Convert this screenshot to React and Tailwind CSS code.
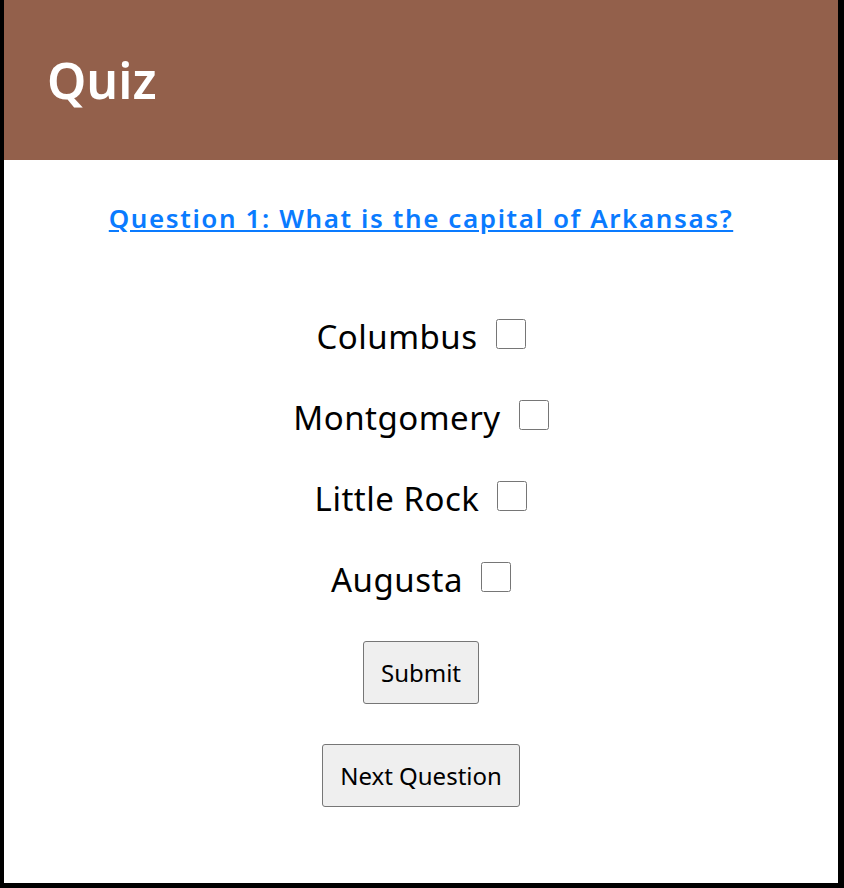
import { useState } from "react";

const options = ["Columbus", "Montgomery", "Little Rock", "Augusta"];

const App = () => {

  const [checked, setChecked] = useState({});

  const toggle = (name) => {
    setChecked({
      ...checked,
      [name]: !checked[name],
    });
  };

  return (
    <div className="min-h-[888px] bg-black pl-[4px] pr-[6px] pb-[5px] font-['Noto_Sans',sans-serif]">

      <div className="bg-white h-[883px]">

        <header className="bg-[#93604b] h-[160px] flex items-center pl-[43px]">
          <h1 className="text-white text-[50px] font-semibold leading-none">
            Quiz
          </h1>
        </header>

        <div className="flex flex-col items-center">

          <a
            href="#"
            className="mt-[38px] text-[#0a7bff] underline text-[26px] font-semibold tracking-[1.6px] leading-[40px]"
          >
            Question 1: What is the capital of Arkansas?
          </a>

          <div className="mt-[76px] flex flex-col items-center gap-[35px]">
            {options.map((opt) => (
              <label
                key={opt}
                className="flex items-center gap-[18px] text-[33px] tracking-[0.5px] leading-[46px] text-black"
              >
                {opt}
                <input
                  type="checkbox"
                  checked={!!checked[opt]}
                  onChange={() => toggle(opt)}
                  className="w-[30px] h-[30px] m-0 -mt-[6px]"
                />
              </label>
            ))}
          </div>

          <button className="mt-[38px] h-[63px] px-[17px] bg-[#efefef] border border-[#767676] rounded-[3px] text-[24px] text-black">
            Submit
          </button>

          <button className="mt-[40px] h-[63px] px-[17px] bg-[#efefef] border border-[#767676] rounded-[3px] text-[24px] text-black">
            Next Question
          </button>

        </div>

      </div>

    </div>
  );
};

export default App;
